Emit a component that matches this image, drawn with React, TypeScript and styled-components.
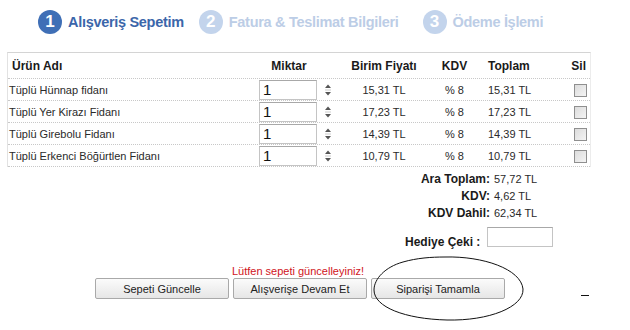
import React from 'react';
import styled, { createGlobalStyle } from 'styled-components';

const GlobalStyle = createGlobalStyle`
  html, body {
    margin: 0;
    padding: 0;
    background: #ffffff;
  }
  body {
    font-family: "Liberation Sans", Arial, sans-serif;
    color: #222;
  }
`;

const Page = styled.div`
  position: relative;
  width: 630px;
  height: 330px;
  overflow: hidden;
  background: #fff;
`;

const Steps = styled.div`
  display: flex;
  align-items: center;
  padding: 10px 0 0 38px;
  height: 24px;
`;

const Step = styled.div<{ $gap: number }>`
  display: flex;
  align-items: center;
  gap: 6px;
  margin-right: ${p => p.$gap}px;
`;

const StepNum = styled.span<{ $active?: boolean }>`
  width: 24px;
  height: 24px;
  border-radius: 50%;
  background: ${p => (p.$active ? '#3f6fb6' : '#c3d4ec')};
  color: #fff;
  font-weight: bold;
  font-size: 17px;
  display: flex;
  align-items: center;
  justify-content: center;
`;

const StepLabel = styled.span<{ $active?: boolean }>`
  font-size: 14.5px;
  font-weight: bold;
  color: ${p => (p.$active ? '#3b66aa' : '#bccde6')};
  letter-spacing: -0.3px;
`;

const Cart = styled.div`
  margin: 18px 0 0 7px;
  width: 584px;
  border-top: 1px solid #d4d4d4;
  border-left: 1px solid #e2e2e2;
  border-right: 1px solid #ececec;
  box-sizing: border-box;
`;

const Row = styled.div<{ $head?: boolean }>`
  display: grid;
  grid-template-columns: 242px 92px 84px 57px 63px 44px;
  align-items: center;
  height: ${p => (p.$head ? '25px' : '21px')};
  border-bottom: 1px dotted #c8c8c8;
  font-size: ${p => (p.$head ? '12px' : '11px')};
  font-weight: ${p => (p.$head ? 'bold' : 'normal')};
  color: ${p => (p.$head ? '#1a1a1a' : '#2a2a2a')};
`;

const Cell = styled.div<{ $align?: 'left' | 'center' | 'right'; $pad?: string }>`
  text-align: ${p => p.$align || 'left'};
  padding: ${p => p.$pad || '0'};
  white-space: nowrap;
`;

const QtyCell = styled.div`
  display: flex;
  align-items: center;
  gap: 6px;
  padding-left: 9px;
`;

const QtyInput = styled.div`
  width: 53px;
  height: 18px;
  border: 1px solid #c4c4c4;
  border-top-color: #a8a8a8;
  padding-left: 3px;
  font-size: 15px;
  line-height: 18px;
  color: #111;
`;

const CheckBox = styled.span`
  display: inline-block;
  width: 11px;
  height: 11px;
  border: 1px solid #8f8f8f;
  background: linear-gradient(135deg, #dcdcdc, #f4f4f4);
`;

const Spinner = () => (
  <svg width="10" height="16" viewBox="0 0 10 16">
    <path d="M2 6 L5 2.5 L8 6 Z" fill="#555" />
    <path d="M2 10 L8 10 L5 13.5 Z" fill="#555" />
    <line x1="2" y1="8" x2="8" y2="8" stroke="#ccc" strokeWidth="1" />
  </svg>
);

const Totals = styled.div`
  display: grid;
  grid-template-columns: 138px 60px;
  column-gap: 4px;
  margin: 4px 0 0 352px;
  font-size: 11px;
  line-height: 17px;
`;

const TotalLabel = styled.span`
  text-align: right;
  font-weight: bold;
  font-size: 12px;
  color: #1a1a1a;
`;

const TotalValue = styled.span`
  color: #2a2a2a;
`;

const GiftRow = styled.div`
  display: flex;
  align-items: flex-start;
  gap: 7px;
  margin: 5px 0 0 405px;
`;

const GiftLabel = styled.span`
  font-size: 12px;
  font-weight: bold;
  color: #1a1a1a;
  padding-top: 8px;
`;

const GiftInput = styled.div`
  width: 64px;
  height: 18px;
  border: 1px solid #c4c4c4;
  border-top-color: #a8a8a8;
`;

const Warning = styled.div`
  margin-top: 15px;
  text-align: center;
  width: 596px;
  font-size: 11px;
  color: #d0141c;
  line-height: 14px;
`;

const Actions = styled.div`
  display: flex;
  align-items: center;
  padding-left: 95px;
  margin-top: 0;
`;

const ButtonGroup = styled.div`
  display: flex;
  gap: 4px;
`;

const Button = styled.button`
  width: 134px;
  height: 21px;
  border: 1px solid #a9a9a9;
  border-radius: 2px;
  background: linear-gradient(#fbfbfb, #e6e6e6);
  font-family: "Liberation Sans", Arial, sans-serif;
  font-size: 11px;
  color: #222;
  padding: 0;
`;

const Dash = styled.span`
  display: inline-block;
  width: 8px;
  height: 1px;
  background: #111;
  margin: 14px 0 0 76px;
`;

const Circle = styled.svg`
  position: absolute;
  left: 371px;
  top: 255px;
  pointer-events: none;
`;

const items = [
  { name: 'Tüplü Hünnap fidanı', price: '15,31 TL', total: '15,31 TL' },
  { name: 'Tüplü Yer Kirazı Fidanı', price: '17,23 TL', total: '17,23 TL' },
  { name: 'Tüplü Girebolu Fidanı', price: '14,39 TL', total: '14,39 TL' },
  { name: 'Tüplü Erkenci Böğürtlen Fidanı', price: '10,79 TL', total: '10,79 TL' },
];

const App: React.FC = () => {
  return (
    <Page>
      <GlobalStyle />
      <Steps>
        <Step $gap={15}>
          <StepNum $active>1</StepNum>
          <StepLabel $active>Alışveriş Sepetim</StepLabel>
        </Step>
        <Step $gap={24}>
          <StepNum>2</StepNum>
          <StepLabel>Fatura &amp; Teslimat Bilgileri</StepLabel>
        </Step>
        <Step $gap={0}>
          <StepNum>3</StepNum>
          <StepLabel>Ödeme İşlemi</StepLabel>
        </Step>
      </Steps>

      <Cart>
        <Row $head>
          <Cell $pad="0 0 0 4px">Ürün Adı</Cell>
          <Cell $align="center" $pad="0 14px 0 0">Miktar</Cell>
          <Cell $align="center">Birim Fiyatı</Cell>
          <Cell $align="center">KDV</Cell>
          <Cell $pad="0 0 0 5px">Toplam</Cell>
          <Cell $align="right" $pad="0 4px 0 0">Sil</Cell>
        </Row>
        {items.map(item => (
          <Row key={item.name}>
            <Cell $pad="0 0 0 1px">{item.name}</Cell>
            <QtyCell>
              <QtyInput>1</QtyInput>
              <Spinner />
            </QtyCell>
            <Cell $align="center">{item.price}</Cell>
            <Cell $align="center">% 8</Cell>
            <Cell $pad="0 0 0 5px">{item.total}</Cell>
            <Cell $align="right" $pad="3px 3px 0 0">
              <CheckBox />
            </Cell>
          </Row>
        ))}
      </Cart>

      <Totals>
        <TotalLabel>Ara Toplam:</TotalLabel>
        <TotalValue>57,72 TL</TotalValue>
        <TotalLabel>KDV:</TotalLabel>
        <TotalValue>4,62 TL</TotalValue>
        <TotalLabel>KDV Dahil:</TotalLabel>
        <TotalValue>62,34 TL</TotalValue>
      </Totals>

      <GiftRow>
        <GiftLabel>Hediye Çeki :</GiftLabel>
        <GiftInput />
      </GiftRow>

      <Warning>Lütfen sepeti güncelleyiniz!</Warning>
      <Actions>
        <ButtonGroup>
          <Button>Sepeti Güncelle</Button>
          <Button>Alışverişe Devam Et</Button>
          <Button>Siparişi Tamamla</Button>
        </ButtonGroup>
        <Dash />
      </Actions>

      <Circle width="156" height="68" viewBox="0 0 156 68">
        <path
          d="M74 2 C112 1 150 14 152 34 C153 52 118 66 76 65 C34 64 3 52 3 35 C3 24 14 12 32 7 C46 3 60 2 74 2 Z"
          fill="none"
          stroke="#111"
          strokeWidth="1"
        />
      </Circle>
    </Page>
  );
};

export default App;
